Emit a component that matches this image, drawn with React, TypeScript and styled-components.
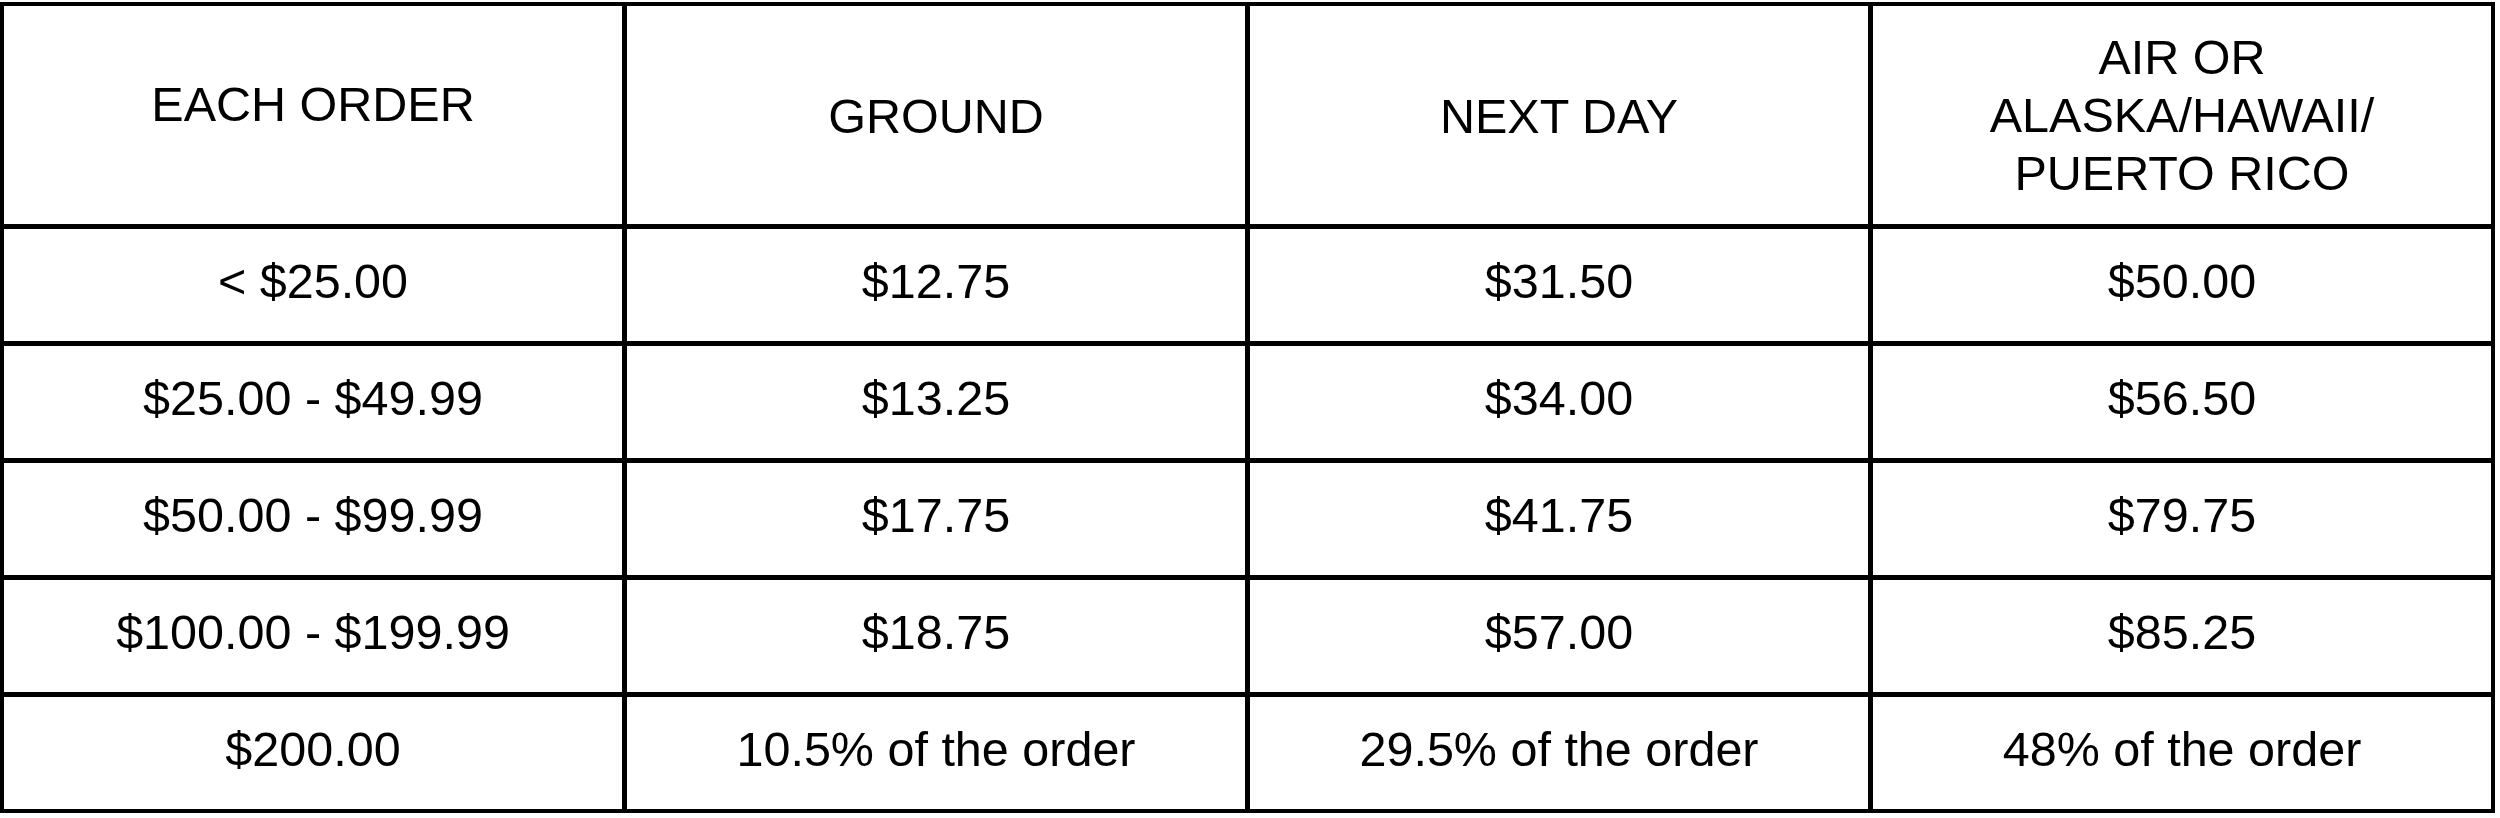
import React from "react";
import styled, { createGlobalStyle } from "styled-components";

const GlobalStyle = createGlobalStyle`
  html, body {
    margin: 0;
    padding: 0;
    background: #ffffff;
  }
  body {
    font-family: "Liberation Sans", Arial, Helvetica, sans-serif;
    color: #000000;
  }
`;

const Page = styled.div`
  padding-top: 2px;
`;

const Grid = styled.div`
  display: grid;
  grid-template-columns: repeat(4, 618px);
  grid-template-rows: 218px repeat(5, 112px);
  gap: 5px;
  padding: 4px;
  background: #000000;
  width: max-content;
`;

const Cell = styled.div<{ $shift?: number }>`
  background: #ffffff;
  display: flex;
  align-items: center;
  justify-content: center;
  text-align: center;
  font-family: "Liberation Sans", Arial, Helvetica, sans-serif;
  font-size: 48.5px;
  line-height: 58px;
  color: #000000;
  padding-bottom: ${(p) => Math.max(0, (p.$shift ?? 0) * 2)}px;
  padding-top: ${(p) => Math.max(0, -(p.$shift ?? 0) * 2)}px;
`;

const HeaderText = styled.span`
  display: block;
  text-transform: uppercase;
`;

const headers: { label: string[]; shift?: number }[] = [
  { label: ["EACH ORDER"], shift: 11 },
  { label: ["GROUND"], shift: -1 },
  { label: ["NEXT DAY"], shift: -1 },
  { label: ["AIR OR", "ALASKA/HAWAII/", "PUERTO RICO"] },
];

const rows: string[][] = [
  ["< $25.00", "$12.75", "$31.50", "$50.00"],
  ["$25.00 - $49.99", "$13.25", "$34.00", "$56.50"],
  ["$50.00 - $99.99", "$17.75", "$41.75", "$79.75"],
  ["$100.00 - $199.99", "$18.75", "$57.00", "$85.25"],
  ["$200.00", "10.5% of the order", "29.5% of the order", "48% of the order"],
];

export default function App() {
  return (
    <>
      <GlobalStyle />
      <Page>
        <Grid>
          {headers.map((h, i) => (
            <Cell key={`h${i}`} $shift={h.shift}>
              <div>
                {h.label.map((l, j) => (
                  <HeaderText key={j}>{l}</HeaderText>
                ))}
              </div>
            </Cell>
          ))}
          {rows.map((r, ri) =>
            r.map((c, ci) => (
              <Cell key={`${ri}-${ci}`} $shift={4}>
                {c}
              </Cell>
            ))
          )}
        </Grid>
      </Page>
    </>
  );
}
